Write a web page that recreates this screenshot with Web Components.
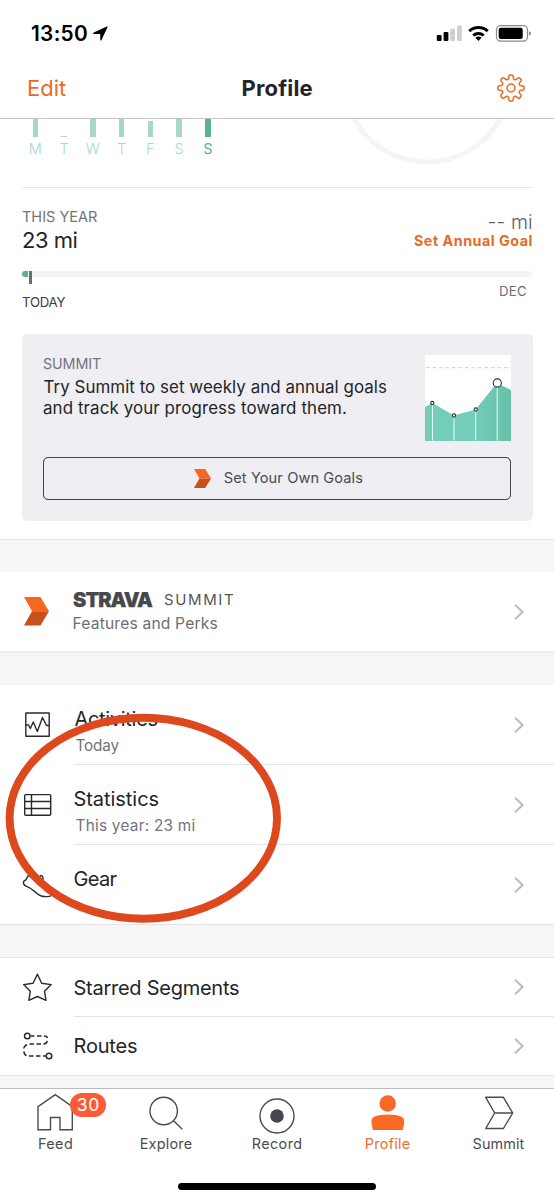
<!DOCTYPE html>
<html lang="en">
<head>
<meta charset="utf-8">
<title>Profile</title>
<style>
html,body{margin:0;padding:0;background:#fff;overflow:hidden}
body{width:554px;height:1200px;font-family:Inter,"Liberation Sans",sans-serif;color:#242428}
</style>
</head>
<body>
<profile-screen></profile-screen>
<script>
function define(name, html, ready) {
  const tpl = document.createElement('template');
  tpl.innerHTML = html;
  customElements.define(name, class extends HTMLElement {
    connectedCallback() {
      if (this.shadowRoot) return;
      this.attachShadow({ mode: 'open' }).appendChild(tpl.content.cloneNode(true));
      if (ready) ready.call(this, this.shadowRoot);
    }
  });
}

/* One line of type, tracked so that its ink fills the width in "w". */
const ctx = document.createElement('canvas').getContext('2d');
define('ui-label', `<style>
  :host{display:block;flex:none;white-space:nowrap}
  span{display:block;line-height:inherit}
</style><span><slot></slot></span>`, function (root) {
  const size = +this.getAttribute('size'), weight = this.getAttribute('weight') || 400;
  const w = +this.getAttribute('w'), text = this.textContent;
  ctx.font = `${weight} ${size}px Inter, "Liberation Sans", sans-serif`;
  const m = ctx.measureText(text);
  const ink = m.actualBoundingBoxLeft + m.actualBoundingBoxRight;
  const s = root.querySelector('span').style;
  this.style.width = w + 'px';
  this.style.height = this.style.lineHeight = (this.getAttribute('line') || 20) + 'px';
  s.font = `${weight} ${size}px/${this.getAttribute('line') || 20}px Inter, "Liberation Sans", sans-serif`;
  s.marginLeft = m.actualBoundingBoxLeft + 'px';
  if (text.length > 1) s.letterSpacing = (w - ink) / (text.length - 1) + 'px';
});

define('ui-chevron', `<style>:host{display:block;width:12px;height:18px}svg{display:block}</style>
<svg width="12" height="18" viewBox="0 0 12 18"><path d="M2 1.8 9.6 9 2 16.2" fill="none" stroke="#bdbdbf" stroke-width="2.1"/></svg>`);

define('ui-arrow', `<style>:host{display:block}svg{display:block;width:100%;height:100%}</style>
<svg viewBox="0 0 25 28" preserveAspectRatio="none"><path d="M0 0H16.500L25 14H8z" fill="#f7671f"/><path d="M8 14H25L16.500 28H0z" fill="#c9501a"/></svg>`);

define('status-bar', `<style>
  :host{display:flex;height:67px;align-items:center;box-sizing:border-box;padding-left:31px}
  svg{display:block}.loc{margin:-1px 0 0 6px}.sig{margin-left:auto;margin-right:22px;margin-top:-1px}
</style>
<ui-label w="56" size="20.8" weight="600" style="color:#000">13:50</ui-label>
<svg class="loc" width="15" height="15" viewBox="0 0 15 15"><path d="M.3 6.700 13.700.4Q14.800.2 14.500 1.300L8.300 14.200Q7.500 15 7.200 14V7.900H.9Q-.4 7.500.3 6.700z" fill="#000"/></svg>
<svg class="sig" width="96" height="18" viewBox="436 24 96 18">
 <rect x="436.800" y="35" width="4.800" height="6" rx="1.200"/><rect x="443.600" y="32" width="4.800" height="9" rx="1.200"/>
 <rect x="450.200" y="28.800" width="4.800" height="12.200" rx="1.200" fill="#cfcfcf"/><rect x="457" y="25.500" width="4.800" height="15.500" rx="1.200" fill="#cfcfcf"/>
 <g fill="none" stroke="#000" stroke-width="3"><path d="M469.300 31.200a13.300 13.300 0 0 1 18.400 0"/><path d="M473.300 35.500a7.600 7.600 0 0 1 10.400 0"/></g>
 <path d="M478.500 40.900 475.400 37.800a4.600 4.600 0 0 1 6.200 0z"/>
 <rect x="496.500" y="25.600" width="31" height="15.600" rx="4.200" fill="none" stroke="#8b8b8b" stroke-width="1.200"/>
 <rect x="498.700" y="27.800" width="24" height="11.200" rx="2"/><path d="M529 31.200q2 .5 2 2.200t-2 2.200z" fill="#8b8b8b"/>
</svg>`);

define('nav-bar', `<style>
  :host{display:grid;grid-template-columns:1fr auto 1fr;height:52px;border-bottom:1px solid #c4c4c6;padding:0 28px;align-items:center;box-sizing:border-box;background:#fff}
  ui-label{margin-top:-10px}.title{margin-left:1px}svg{display:block;justify-self:end;margin:-10px 1px 0 0}
</style>
<ui-label w="38" size="22" style="color:#ec6a26">Edit</ui-label>
<ui-label class="title" w="70" size="22" weight="650">Profile</ui-label>
<svg width="28" height="28" viewBox="-14 -14 28 28" fill="none" stroke="#ea6a24" stroke-width="1.500" stroke-linejoin="round"><path id="gear"/><circle r="3.900"/></svg>`, root => {
  /* Eight rounded teeth around the hub */
  let d = '';
  const p = (r, a) => (r * Math.cos(a)).toFixed(2) + ' ' + (r * Math.sin(a)).toFixed(2);
  for (let i = 0; i < 8; i++) {
    const a = i * Math.PI / 4 - Math.PI / 2;
    d += (i ? 'L' : 'M') + p(9.700, a - .26) + 'L' + p(12.300, a - .17) + 'Q' + p(13.300, a - .14) + ' ' + p(13.100, a - .04) +
      'L' + p(13.100, a + .04) + 'Q' + p(13.300, a + .14) + ' ' + p(12.300, a + .17) + 'L' + p(9.700, a + .26) + 'Q' + p(8.400, a + Math.PI / 8) + ' ' + p(9.700, a + Math.PI / 4 - .26);
  }
  root.getElementById('gear').setAttribute('d', d + 'Z');
});

define('day-bar', `<style>
  :host{display:flex;flex-direction:column;align-items:center;width:28.750px;--c:#a4d9c9;color:#a4d9c9}
  :host([on]){--c:#56b393;color:#56b393}
  .bar{height:17.500px;display:flex;align-items:flex-end;margin-bottom:2.500px}
  i{display:block;width:5.400px;background:var(--c)}
  span{font:300 14.500px/20px Inter,sans-serif}
  :host([on]) span{font-weight:400}
</style><div class="bar"><i></i></div><span><slot></slot></span>`, function (root) {
  const h = +this.getAttribute('h'), s = root.querySelector('i').style;
  s.height = h + 'px';
  if (h < 2) s.background = '#c3cfcc';
});

define('week-summary', `<style>
  :host{display:flex;justify-content:space-between;height:69px;margin:0 22px;border-bottom:1px solid #e6e6ea;box-sizing:border-box;overflow:hidden}
  .days{display:flex;margin-left:-1px}svg{display:block;margin-right:25px}
</style>
<div class="days"><day-bar h="17.500">M</day-bar><day-bar h="1">T</day-bar><day-bar h="17.500">W</day-bar><day-bar h="17.500">T</day-bar><day-bar h="15.500">F</day-bar><day-bar h="17.500">S</day-bar><day-bar h="17.500" on>S</day-bar></div>
<svg width="160" height="60" viewBox="347 119 160 60"><circle cx="427" cy="78.500" r="83.500" fill="none" stroke="#f5f5f9" stroke-width="5"/></svg>`);

define('year-goal', `<style>
  :host{display:block;padding:19px 22px 0;height:146px;box-sizing:border-box}
  .top{display:flex;justify-content:space-between;height:63.500px}
  .r{display:flex;flex-direction:column;align-items:flex-end;padding-top:4px}
  .track{height:6.500px;background:#f4f4f8;border-radius:3px;display:flex;align-items:flex-start}
  .done{width:6px;height:6.500px;border-radius:3px 0 0 3px;background:#56b393}
  .now{width:3.800px;height:13.500px;margin-left:.5px;background:#6b6b75}
  .ends{display:flex;justify-content:space-between;padding:4px 6px 0 0}
</style>
<div class="top"><div><ui-label w="75" size="14.500" style="color:#73737b">THIS YEAR</ui-label><ui-label w="54.500" size="22" line="26" style="margin-left:1px">23 mi</ui-label></div>
<div class="r"><ui-label w="43.500" size="19.500" weight="300" line="22" style="color:#5c5c66">-- mi</ui-label><ui-label w="117.500" size="14.300" weight="700" line="14" style="color:#e66a28;margin:1px .5px 0 0">Set Annual Goal</ui-label></div></div>
<div class="track"><div class="done"></div><div class="now"></div></div>
<div class="ends"><ui-label w="43.500" size="13.200" style="margin-top:11px;color:#3c3c42">TODAY</ui-label><ui-label w="26" size="13.200" style="color:#6b6b74">DEC</ui-label></div>`);

define('goal-card', `<style>
  :host{display:flex;flex-direction:column;margin:0 21.500px;height:187px;box-sizing:border-box;padding:20.500px 21.500px 0;border-radius:5px;background:#efeef3}
  .top{display:flex;justify-content:space-between;height:102.500px}
  .btn{display:flex;align-items:center;justify-content:center;height:42.500px;box-sizing:border-box;border:1.500px solid #47474d;outline:.4px solid #47474d80;outline-offset:-1.200px;border-radius:5px;color:#4b4b53}
  ui-arrow{width:17px;height:19px;margin-right:13px;margin-left:2px}svg{display:block}
</style>
<div class="top"><div><ui-label w="58" size="14.300" line="17" style="color:#73737b">SUMMIT</ui-label>
<ui-label w="343.500" size="16.900" line="20.700" style="margin:5.500px 0 0 .5px">Try Summit to set weekly and annual goals</ui-label>
<ui-label w="303" size="16.900" line="20.700">and track your progress toward them.</ui-label></div>
<svg width="86" height="86" viewBox="0 0 86 86"><defs><linearGradient id="g" x2="1" y2="0"><stop stop-color="#75cdb8"/><stop offset=".55" stop-color="#74cdb8"/><stop offset="1" stop-color="#66c0aa"/></linearGradient></defs>
<rect width="86" height="86" fill="#fff"/><path d="M1 12.700H86" stroke="#d8d8da" stroke-width="1.300" stroke-dasharray="3.500 3"/>
<path d="M0 52 7.500 48 29 60.500 50.500 54.500 72 28 86 35V86H0z" fill="url(#g)"/><path d="M7.500 50V85.500M29 62V85.500M50.700 56V85.500M72.200 32V85.500" stroke="#e6fff8" stroke-width="1"/>
<g fill="#fff" stroke="#303236" stroke-width="1.100"><circle cx="7.300" cy="48" r="1.600"/><circle cx="29" cy="60.500" r="1.600"/><circle cx="50.700" cy="54.500" r="1.600"/><circle cx="72.300" cy="28" r="4.100"/></g></svg></div>
<div class="btn"><ui-arrow></ui-arrow><ui-label w="138.500" size="14.600">Set Your Own Goals</ui-label></div>`);

define('gap-band', `<style>:host{display:block;background:#f6f6f9;box-sizing:border-box}</style>`);

define('summit-row', `<style>
  :host{display:flex;height:79px;align-items:center;padding:0 29px 0 24px;box-sizing:border-box}
  .mark{width:25px;height:28.500px;margin-right:24px}.t{display:flex;gap:11px}ui-chevron{margin-left:auto}
  .brand{color:#47484b;-webkit-text-stroke:.25px #47484b}
</style><ui-arrow class="mark"></ui-arrow>
<div><div class="t"><ui-label class="brand" w="80" size="20" weight="900" line="22">STRAVA</ui-label><ui-label w="69" size="15" line="22" style="color:#55565a">SUMMIT</ui-label></div>
<ui-label w="144" size="15.600" line="24" style="color:#6d6d75;margin-top:1px;margin-bottom:-1px;margin-left:.5px">Features and Perks</ui-label></div><ui-chevron></ui-chevron>`);

define('menu-row', `<style>
  :host{display:flex;height:80px;align-items:center;padding:0 29px 0 22px;box-sizing:border-box;background:linear-gradient(#e6e6ea,#e6e6ea) 74px 100%/480px 1px no-repeat}
  :host([last]){background:none}
  :host([short]){height:59px}
  .icon{width:52.500px;flex:none}
  .text{align-self:flex-start;padding-top:24px}:host([short]) .text{align-self:center;padding:0}
  ui-chevron{margin-left:auto}
  :host([short]) ui-chevron{margin-top:-1px}
  ::slotted(svg){display:block}
</style><div class="icon"><slot name="icon"></slot></div><div class="text"><slot></slot></div><ui-chevron></ui-chevron>`);

define('tab-item', `<style>
  :host{display:flex;flex-direction:column;align-items:center;position:relative;padding-top:3px;color:#4b4b53}
  ::slotted(svg){display:block;margin-bottom:2px;overflow:visible}
  ::slotted(.badge){position:absolute;left:70px;top:4px;width:36px;height:24px;border-radius:12px;background:#fb5c38;color:#fff;display:flex;align-items:center;justify-content:center}
</style><slot></slot>`);

define('tab-bar', `<style>
  :host{display:grid;grid-template-columns:repeat(5,1fr);height:94px;border-top:1px solid #bcbcbe;box-sizing:border-box;background:#fff}
  .l{fill:none;stroke:#4b4b53;stroke-width:1.400}
</style>
<tab-item><svg width="40" height="40" viewBox="0 0 40 40"><path class="l" d="M3 37.700V14.700L20.300 2.700 37.300 14.700V37.700H25V25.500H15.500V37.700z"/></svg><ui-label w="33" size="14.400">Feed</ui-label><div class="badge"><ui-label w="20.500" size="17.500" line="24">30</ui-label></div></tab-item>
<tab-item><svg width="40" height="40" viewBox="0 0 40 40"><circle class="l" cx="17.700" cy="19" r="13.700"/><path class="l" d="M27.500 28.700 36.300 37.300"/></svg><ui-label w="51" size="14.400">Explore</ui-label></tab-item>
<tab-item><svg width="40" height="40" viewBox="0 0 40 40"><circle class="l" cx="20" cy="24" r="17"/><circle cx="20" cy="24" r="6.800" fill="#46464e"/></svg><ui-label w="48.500" size="14.400">Record</ui-label></tab-item>
<tab-item><svg width="40" height="40" viewBox="0 0 40 40" fill="#f86a24"><circle cx="19.700" cy="11.500" r="8.300"/><path d="M3.400 29q0-6.500 16.400-6.500T36.200 29q0 3.500-1.500 9H4.900q-1.500-5.500-1.500-9z"/></svg><ui-label w="44" size="14.400" style="color:#e8702f">Profile</ui-label></tab-item>
<tab-item><svg width="40" height="40" viewBox="0 0 40 40"><path class="l" stroke-linejoin="round" d="M6.700 5.300H24.400L33.700 21 24.400 36.500H6.700L15.700 21zM15.700 21H33.700"/></svg><ui-label w="52" size="14.400">Summit</ui-label></tab-item>`);

define('home-indicator', `<style>:host{display:block;width:198px;height:6.500px;border-radius:4px;background:#000;margin:1px auto 0}</style>`);

define('focus-ring', `<style>:host{position:absolute;left:0;top:708px;pointer-events:none}svg{display:block}</style>
<svg width="290" height="220" viewBox="0 708 290 220"><ellipse cx="143.300" cy="818.200" rx="133.700" ry="100.500" fill="none" stroke="#dd481c" stroke-width="7.900"/></svg>`);

define('profile-screen', `<style>
  :host{display:block;position:relative;width:554px;height:1200px;overflow:hidden;background:#fff}
  .i{fill:none;stroke:#2a2a2e;stroke-width:1.400;stroke-linejoin:round}
  .sub{color:#73737b;margin:7px 0 0 1px}
</style>
<status-bar></status-bar><nav-bar></nav-bar><week-summary></week-summary><year-goal></year-goal><goal-card></goal-card>
<gap-band style="margin-top:18px;height:33px;border-top:1px solid #e4e4e8"></gap-band>
<summit-row></summit-row>
<gap-band style="height:34px;border-top:2px solid #ececef"></gap-band>
<menu-row><svg slot="icon" class="i" width="32" height="32" viewBox="22 709 32 32"><rect x="25.800" y="713" width="23.400" height="23.200"/><path d="M26 725H28.500L30.300 728.500 33.300 722 37.300 731.500 42.500 717.500 46.500 725.500H49"/></svg>
 <ui-label w="83" size="20">Activities</ui-label><ui-label class="sub" w="44" size="15.300">Today</ui-label></menu-row>
<menu-row><svg slot="icon" class="i" width="32" height="32" viewBox="22 789 32 32"><rect x="24.700" y="794.600" width="26" height="20.600" rx="1"/><path d="M24.700 801.500H50.700M24.700 808.500H50.700M31.500 794.600V815.200"/></svg>
 <ui-label w="84" size="20">Statistics</ui-label><ui-label class="sub" w="119" size="15.300">This year: 23 mi</ui-label></menu-row>
<menu-row last><svg slot="icon" class="i" width="32" height="32" viewBox="22 869 32 32"><path d="M28.500 875.500C26 878 27.500 879 24.500 880.700 22.600 882 23 885 26.500 886.300 34 888.500 35.500 895 42 896.200 46.500 897 50 896.500 51.500 895.500V889L43 882V877.500Q42.500 875.500 40.500 875.500L39 878Q33 880 28.500 875.500z"/></svg>
 <ui-label w="43" size="20">Gear</ui-label></menu-row>
<gap-band style="height:34px;margin-top:-1px;border-top:1px solid #e4e4e8;border-bottom:1px solid #e4e4e8"></gap-band>
<menu-row short><svg slot="icon" class="i" width="32" height="32" viewBox="22 971 32 32" style="margin-top:-1px"><path d="M37.400 974.200 41.700 983.200 51.200 984.600 44.500 991.300 46 1000.300 37.400 996.500 28.800 1000.300 30.300 991.300 23.600 984.600 33.100 983.200z"/></svg>
 <ui-label w="164.500" size="20">Starred Segments</ui-label></menu-row>
<menu-row short last><svg slot="icon" class="i" width="32" height="32" viewBox="22 1030 32 32" style="stroke-width:1.500;margin-top:-1px"><circle cx="27.300" cy="1036" r="2.800"/><circle cx="49" cy="1056" r="2.800"/><path d="M31 1036H34.500M37 1036H41.500M44 1036Q47 1036 47.500 1038M47.300 1041Q46.500 1044 43.500 1044M41 1044H36.500M34 1044H29.500M27 1044.500Q24 1046 23.700 1048.500M23.800 1051.500Q24.500 1055 26.500 1055.500M29 1056H33.500M36 1056H40.500M43 1056H46"/></svg>
 <ui-label w="62.500" size="20" style="margin-top:-1px">Routes</ui-label></menu-row>
<gap-band style="height:13px;margin-top:-1px;border-top:1px solid #e4e4e8"></gap-band>
<tab-bar></tab-bar><home-indicator></home-indicator><focus-ring></focus-ring>`);
</script>
</body>
</html>
